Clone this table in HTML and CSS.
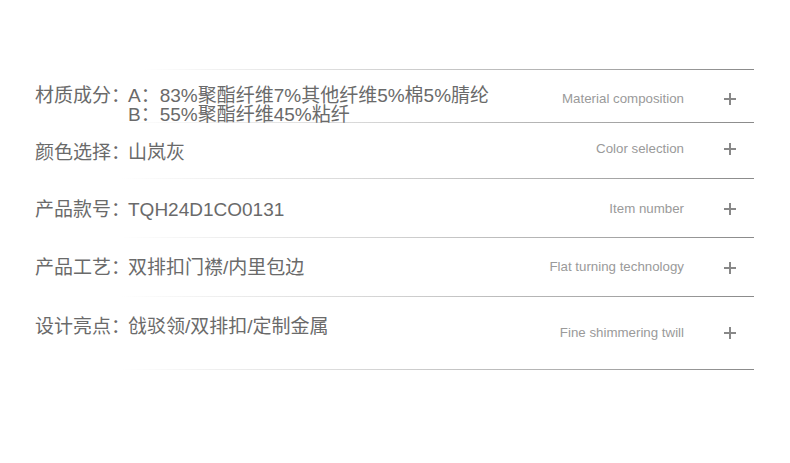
FILE: index.html
```html
<!DOCTYPE html>
<html lang="zh">
<head>
<meta charset="utf-8">
<title>Product details</title>
<link rel="stylesheet" href="styles.css">
</head>
<body>
<div class="list">
  <div class="row r1">
    <div class="cn">
      <div class="line"><span class="label">材质成分：</span><span>A：83%聚酯纤维7%其他纤维5%棉5%腈纶</span></div>
      <div class="line"><span class="label"></span><span>B：55%聚酯纤维45%粘纤</span></div>
    </div>
    <div class="en">Material composition</div>
    <div class="plus"></div>
  </div>
  <div class="row r2">
    <div class="cn"><div class="line"><span class="label">颜色选择：</span><span>山岚灰</span></div></div>
    <div class="en">Color selection</div>
    <div class="plus"></div>
  </div>
  <div class="row r3">
    <div class="cn"><div class="line"><span class="label">产品款号：</span><span>TQH24D1CO0131</span></div></div>
    <div class="en">Item number</div>
    <div class="plus"></div>
  </div>
  <div class="row r4">
    <div class="cn"><div class="line"><span class="label">产品工艺：</span><span>双排扣门襟/内里包边</span></div></div>
    <div class="en">Flat turning technology</div>
    <div class="plus"></div>
  </div>
  <div class="row r5">
    <div class="cn"><div class="line"><span class="label">设计亮点：</span><span>戗驳领/双排扣/定制金属</span></div></div>
    <div class="en">Fine shimmering twill</div>
    <div class="plus"></div>
  </div>
</div>
</body>
</html>
```

FILE: styles.css
```css
html, body {
  margin: 0;
  padding: 0;
  background: #ffffff;
}
body {
  width: 790px;
  height: 463px;
  overflow: hidden;
}
.list {
  margin: 69px 0 0 35px;
  width: 719px;
  padding-top: 1px;
  background: linear-gradient(to right, rgba(200,200,200,0) 15%, #d8d8d8 45%, #8a8a8a 100%) top / 100% 1px no-repeat;
}
.row {
  display: flex;
  align-items: flex-start;
  box-sizing: border-box;
  padding-right: 18px;
  background: linear-gradient(to right, rgba(200,200,200,0) 12%, #d8d8d8 45%, #8a8a8a 100%) bottom / 100% 1px no-repeat;
}
.cn {
  flex: 1;
  font-family: "Liberation Sans", "Noto Sans CJK SC", sans-serif;
  font-size: 19px;
  line-height: 19px;
  color: #6a6a6a;
}
.line {
  display: flex;
  white-space: nowrap;
}
.label {
  width: 93px;
  flex: none;
}
.en {
  font-family: "Liberation Sans", Arial, sans-serif;
  font-size: 13.3px;
  line-height: 16px;
  color: #9a9a9a;
  text-align: right;
  white-space: nowrap;
}
.plus {
  width: 12px;
  height: 12px;
  margin-left: 40px;
  flex: none;
  background:
    linear-gradient(#888, #888) center / 12px 2px no-repeat,
    linear-gradient(#888, #888) center / 2px 12px no-repeat;
}
.r1 { height: 53px; }
.r1 .cn { padding-top: 16px; }
.r1 .en { margin-top: 21px; }
.r1 .plus { margin-top: 23px; }

.r2 { height: 56px; }
.r2 .cn { padding-top: 20px; }
.r2 .en { margin-top: 18px; }
.r2 .plus { margin-top: 20px; }

.r3 { height: 59px; }
.r3 .cn { padding-top: 21px; }
.r3 .en { margin-top: 22px; }
.r3 .plus { margin-top: 24px; }

.r4 { height: 59px; }
.r4 .cn { padding-top: 20px; }
.r4 .en { margin-top: 21px; }
.r4 .plus { margin-top: 24px; }

.r5 { height: 73px; }
.r5 .cn { padding-top: 20px; }
.r5 .en { margin-top: 28px; }
.r5 .plus { margin-top: 30px; }
```
